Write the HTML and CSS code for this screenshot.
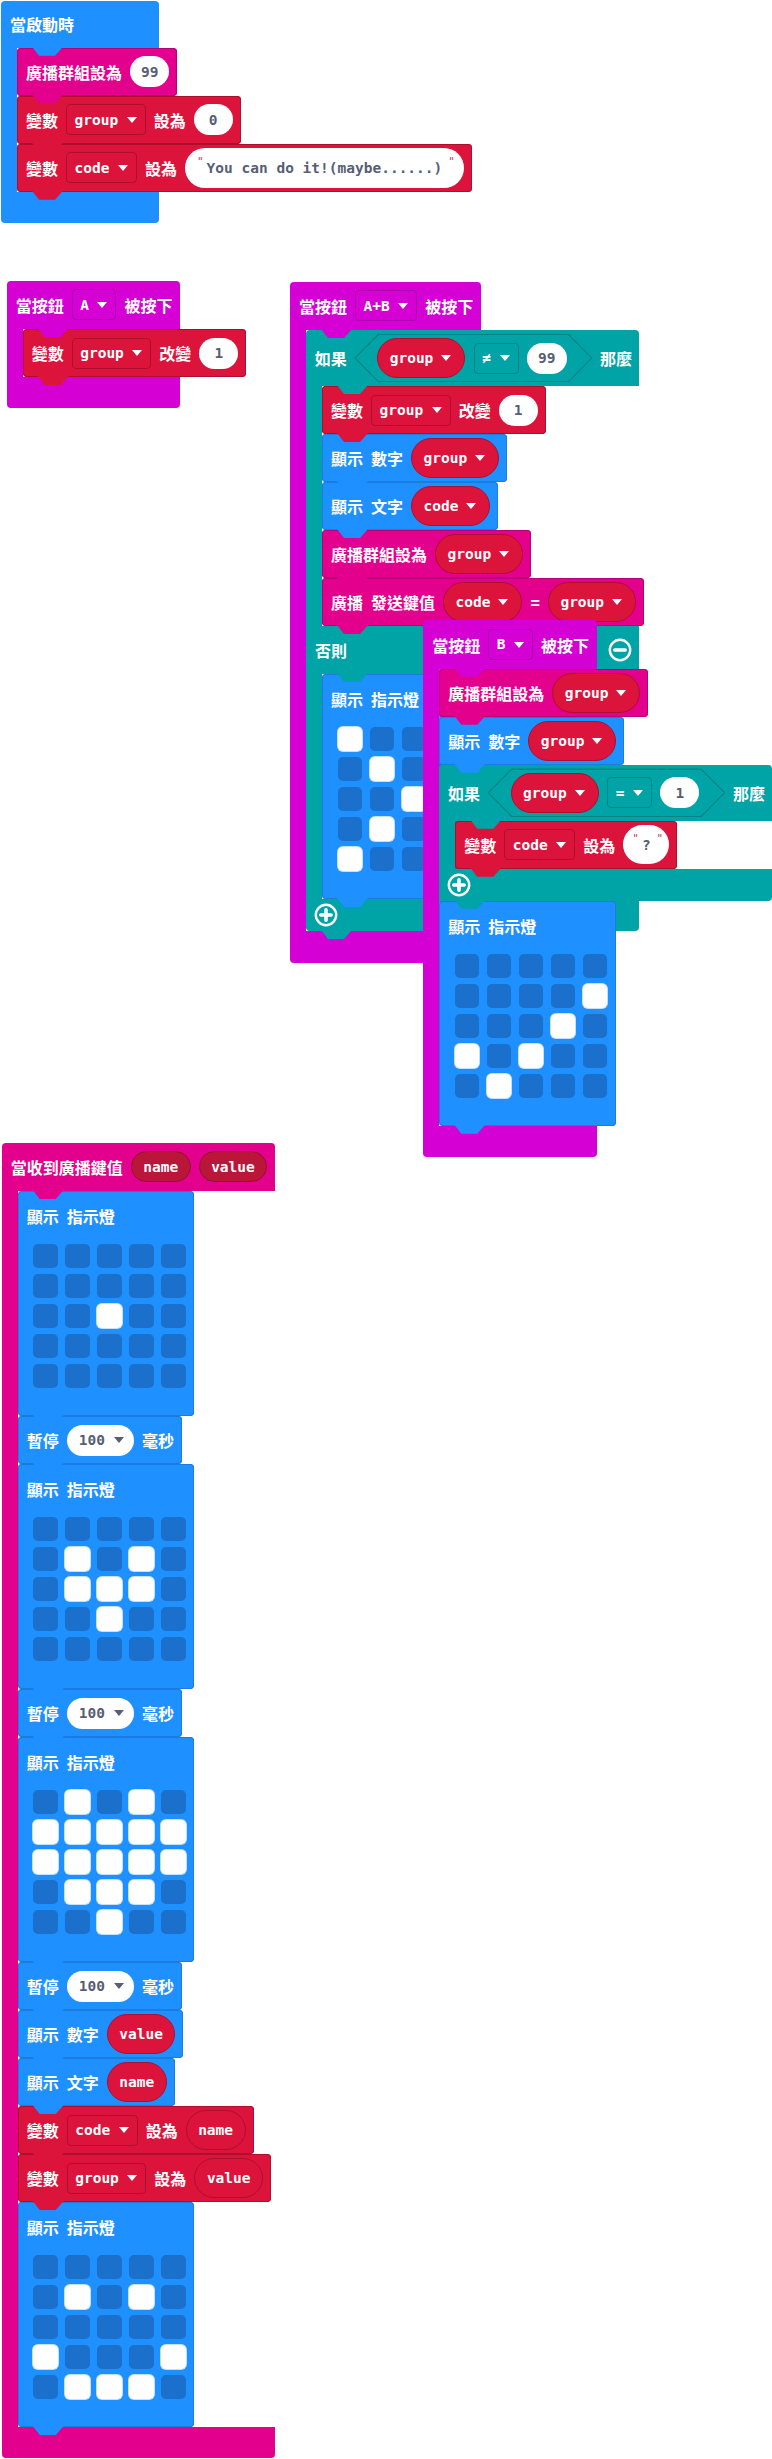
FILE: index.html
```html
<!DOCTYPE html>
<html lang="zh-Hant">
<head>
<meta charset="utf-8">
<title>MakeCode blocks</title>
<link rel="stylesheet" href="styles.css">
</head>
<body>
<div class="ws">

  <!-- on start -->
  <div class="stack s-start">
    <div class="cblk c-blue w-start">
      <div class="head"><span class="lbl">當啟動時</span></div>
      <div class="mid"><div class="spine"></div><div class="kids">
        <div class="blk c-radio"><span class="lbl">廣播群組設為</span><span class="num">99</span></div>
        <div class="blk c-var"><span class="lbl">變數</span><span class="dd">group<i class="arr"></i></span><span class="lbl">設為</span><span class="num">0</span></div>
        <div class="blk c-var"><span class="lbl">變數</span><span class="dd">code<i class="arr"></i></span><span class="lbl">設為</span><span class="str"><i class="q q1">"</i>You can do it!(maybe......)<i class="q q2">"</i></span></div>
      </div></div>
      <div class="foot"></div>
    </div>
  </div>

  <!-- button A -->
  <div class="stack s-a">
    <div class="cblk c-input">
      <div class="head"><span class="lbl">當按鈕</span><span class="dd">A<i class="arr"></i></span><span class="lbl">被按下</span></div>
      <div class="mid"><div class="spine"></div><div class="kids">
        <div class="blk c-var"><span class="lbl">變數</span><span class="dd">group<i class="arr"></i></span><span class="lbl">改變</span><span class="num">1</span></div>
      </div></div>
      <div class="foot"></div>
    </div>
  </div>

  <!-- button A+B -->
  <div class="stack s-ab">
    <div class="cblk c-input tall-foot">
      <div class="head"><span class="lbl">當按鈕</span><span class="dd">A+B<i class="arr"></i></span><span class="lbl">被按下</span></div>
      <div class="mid"><div class="spine"></div><div class="kids">
        <div class="cblk c-logic ifb">
          <div class="head ifh">
            <span class="lbl">如果</span>
            <div class="hex"><span class="rep">group<i class="arr"></i></span><span class="dd">≠<i class="arr"></i></span><span class="num">99</span></div>
            <span class="lbl">那麼</span>
          </div>
          <div class="mid"><div class="spine"></div><div class="kids">
            <div class="blk c-var"><span class="lbl">變數</span><span class="dd">group<i class="arr"></i></span><span class="lbl">改變</span><span class="num">1</span></div>
            <div class="blk c-blue"><span class="lbl">顯示</span><span class="lbl">數字</span><span class="rep">group<i class="arr"></i></span></div>
            <div class="blk c-blue"><span class="lbl">顯示</span><span class="lbl">文字</span><span class="rep">code<i class="arr"></i></span></div>
            <div class="blk c-radio"><span class="lbl">廣播群組設為</span><span class="rep">group<i class="arr"></i></span></div>
            <div class="blk c-radio"><span class="lbl">廣播</span><span class="lbl">發送鍵值</span><span class="rep">code<i class="arr"></i></span><span class="lbl">=</span><span class="rep">group<i class="arr"></i></span></div>
          </div></div>
          <div class="ehead"><span class="lbl">否則</span>
            <svg class="ico" viewBox="0 0 24 24"><circle cx="12" cy="12" r="10.2" fill="none" stroke="#fff" stroke-width="2.4"/><path d="M6.8 12h10.4" stroke="#fff" stroke-width="3.6" stroke-linecap="round"/></svg>
          </div>
          <div class="mid"><div class="spine"></div><div class="kids">
            <div class="blk c-blue leds-blk">
              <div class="ttl"><span class="lbl">顯示</span><span class="lbl">指示燈</span></div>
              <div class="grid">
                <i class="led on"></i><i class="led"></i><i class="led"></i><i class="led"></i><i class="led"></i>
                <i class="led"></i><i class="led on"></i><i class="led"></i><i class="led"></i><i class="led"></i>
                <i class="led"></i><i class="led"></i><i class="led on"></i><i class="led"></i><i class="led"></i>
                <i class="led"></i><i class="led on"></i><i class="led"></i><i class="led"></i><i class="led"></i>
                <i class="led on"></i><i class="led"></i><i class="led"></i><i class="led"></i><i class="led"></i>
              </div>
            </div>
          </div></div>
          <div class="foot ifoot">
            <svg class="ico" viewBox="0 0 24 24"><circle cx="12" cy="12" r="10.2" fill="none" stroke="#fff" stroke-width="2.4"/><path d="M6.8 12h10.4M12 6.8v10.4" stroke="#fff" stroke-width="3.6" stroke-linecap="round"/></svg>
          </div>
        </div>
      </div></div>
      <div class="foot"></div>
    </div>
  </div>

  <!-- button B -->
  <div class="stack s-b">
    <div class="cblk c-input">
      <div class="head"><span class="lbl">當按鈕</span><span class="dd">B<i class="arr"></i></span><span class="lbl">被按下</span></div>
      <div class="mid"><div class="spine"></div><div class="kids">
        <div class="blk c-radio"><span class="lbl">廣播群組設為</span><span class="rep">group<i class="arr"></i></span></div>
        <div class="blk c-blue"><span class="lbl">顯示</span><span class="lbl">數字</span><span class="rep">group<i class="arr"></i></span></div>
        <div class="cblk c-logic ifb">
          <div class="head ifh">
            <span class="lbl">如果</span>
            <div class="hex"><span class="rep">group<i class="arr"></i></span><span class="dd">=<i class="arr"></i></span><span class="num">1</span></div>
            <span class="lbl">那麼</span>
          </div>
          <div class="mid"><div class="spine"></div><div class="kids">
            <div class="blk c-var"><span class="lbl">變數</span><span class="dd">code<i class="arr"></i></span><span class="lbl">設為</span><span class="str short"><i class="q q1">"</i>?<i class="q q2">"</i></span></div>
          </div></div>
          <div class="foot ifoot">
            <svg class="ico" viewBox="0 0 24 24"><circle cx="12" cy="12" r="10.2" fill="none" stroke="#fff" stroke-width="2.4"/><path d="M6.8 12h10.4M12 6.8v10.4" stroke="#fff" stroke-width="3.6" stroke-linecap="round"/></svg>
          </div>
        </div>
        <div class="blk c-blue leds-blk">
          <div class="ttl"><span class="lbl">顯示</span><span class="lbl">指示燈</span></div>
          <div class="grid">
            <i class="led"></i><i class="led"></i><i class="led"></i><i class="led"></i><i class="led"></i>
            <i class="led"></i><i class="led"></i><i class="led"></i><i class="led"></i><i class="led on"></i>
            <i class="led"></i><i class="led"></i><i class="led"></i><i class="led on"></i><i class="led"></i>
            <i class="led on"></i><i class="led"></i><i class="led on"></i><i class="led"></i><i class="led"></i>
            <i class="led"></i><i class="led on"></i><i class="led"></i><i class="led"></i><i class="led"></i>
          </div>
        </div>
      </div></div>
      <div class="foot"></div>
    </div>
  </div>

  <!-- on received -->
  <div class="stack s-recv">
    <div class="cblk c-radio">
      <div class="head"><span class="lbl">當收到廣播鍵值</span><span class="rep prm">name</span><span class="rep prm">value</span></div>
      <div class="mid"><div class="spine"></div><div class="kids">
        <div class="blk c-blue leds-blk">
          <div class="ttl"><span class="lbl">顯示</span><span class="lbl">指示燈</span></div>
          <div class="grid">
            <i class="led"></i><i class="led"></i><i class="led"></i><i class="led"></i><i class="led"></i>
            <i class="led"></i><i class="led"></i><i class="led"></i><i class="led"></i><i class="led"></i>
            <i class="led"></i><i class="led"></i><i class="led on"></i><i class="led"></i><i class="led"></i>
            <i class="led"></i><i class="led"></i><i class="led"></i><i class="led"></i><i class="led"></i>
            <i class="led"></i><i class="led"></i><i class="led"></i><i class="led"></i><i class="led"></i>
          </div>
        </div>
        <div class="blk c-blue"><span class="lbl">暫停</span><span class="num numdd">100<i class="arr"></i></span><span class="lbl">毫秒</span></div>
        <div class="blk c-blue leds-blk">
          <div class="ttl"><span class="lbl">顯示</span><span class="lbl">指示燈</span></div>
          <div class="grid">
            <i class="led"></i><i class="led"></i><i class="led"></i><i class="led"></i><i class="led"></i>
            <i class="led"></i><i class="led on"></i><i class="led"></i><i class="led on"></i><i class="led"></i>
            <i class="led"></i><i class="led on"></i><i class="led on"></i><i class="led on"></i><i class="led"></i>
            <i class="led"></i><i class="led"></i><i class="led on"></i><i class="led"></i><i class="led"></i>
            <i class="led"></i><i class="led"></i><i class="led"></i><i class="led"></i><i class="led"></i>
          </div>
        </div>
        <div class="blk c-blue"><span class="lbl">暫停</span><span class="num numdd">100<i class="arr"></i></span><span class="lbl">毫秒</span></div>
        <div class="blk c-blue leds-blk">
          <div class="ttl"><span class="lbl">顯示</span><span class="lbl">指示燈</span></div>
          <div class="grid">
            <i class="led"></i><i class="led on"></i><i class="led"></i><i class="led on"></i><i class="led"></i>
            <i class="led on"></i><i class="led on"></i><i class="led on"></i><i class="led on"></i><i class="led on"></i>
            <i class="led on"></i><i class="led on"></i><i class="led on"></i><i class="led on"></i><i class="led on"></i>
            <i class="led"></i><i class="led on"></i><i class="led on"></i><i class="led on"></i><i class="led"></i>
            <i class="led"></i><i class="led"></i><i class="led on"></i><i class="led"></i><i class="led"></i>
          </div>
        </div>
        <div class="blk c-blue"><span class="lbl">暫停</span><span class="num numdd">100<i class="arr"></i></span><span class="lbl">毫秒</span></div>
        <div class="blk c-blue"><span class="lbl">顯示</span><span class="lbl">數字</span><span class="rep plain">value</span></div>
        <div class="blk c-blue"><span class="lbl">顯示</span><span class="lbl">文字</span><span class="rep plain">name</span></div>
        <div class="blk c-var"><span class="lbl">變數</span><span class="dd">code<i class="arr"></i></span><span class="lbl">設為</span><span class="rep plain">name</span></div>
        <div class="blk c-var"><span class="lbl">變數</span><span class="dd">group<i class="arr"></i></span><span class="lbl">設為</span><span class="rep plain">value</span></div>
        <div class="blk c-blue leds-blk">
          <div class="ttl"><span class="lbl">顯示</span><span class="lbl">指示燈</span></div>
          <div class="grid">
            <i class="led"></i><i class="led"></i><i class="led"></i><i class="led"></i><i class="led"></i>
            <i class="led"></i><i class="led on"></i><i class="led"></i><i class="led on"></i><i class="led"></i>
            <i class="led"></i><i class="led"></i><i class="led"></i><i class="led"></i><i class="led"></i>
            <i class="led on"></i><i class="led"></i><i class="led"></i><i class="led"></i><i class="led on"></i>
            <i class="led"></i><i class="led on"></i><i class="led on"></i><i class="led on"></i><i class="led"></i>
          </div>
        </div>
      </div></div>
      <div class="foot"></div>
    </div>
  </div>

</div>
</body>
</html>
```
FILE: styles.css
```css
:root {
  --mono: "DejaVu Sans Mono", "Liberation Mono", monospace;
  --cjk: "Noto Sans CJK TC", "Noto Sans", sans-serif;
}

body {
  margin: 0;
  background: #fff;
}

.ws {
  position: relative;
  width: 772px;
  height: 2459px;
  overflow: hidden;
  font-family: var(--cjk);
  font-size: 16px;
  font-weight: 700;
  color: #fff;
}

/* free-canvas placement of the block stacks */
.stack { position: absolute; z-index: 1; }
.s-start { left: 1px; top: 0.5px; }
.s-a { left: 6.7px; top: 280.7px; }
.s-ab { left: 290px; top: 281.7px; }
.s-b { left: 423.3px; top: 620.4px; z-index: 2; }
.s-recv { left: 1.7px; top: 1142.7px; }

/* category colours */
.c-blue  { --c: #1E90FF; --d: #1a7be0; }
.c-input { --c: #D400D4; --d: #ab00ab; }
.c-radio { --c: #E3008C; --d: #b8007a; }
.c-var   { --c: #DC143C; --d: #ad0f2f; }
.c-logic { --c: #00A4A6; --d: #008486; }

/* simple statement block */
.blk {
  position: relative;
  display: flex;
  align-items: center;
  gap: 8px;
  height: 48px;
  padding: 0 8px 0 9px;
  box-sizing: border-box;
  width: max-content;
  flex-shrink: 0;
  background: var(--c);
  border-radius: 4px;
  box-shadow: inset 0 0 0 1px var(--d);
}

/* the connector tab under each statement */
.blk::after,
.cblk > .head::after,
.cblk > .ehead::after,
.cblk > .ifoot::after {
  content: "";
  position: absolute;
  left: 15px;
  bottom: -8px;
  width: 31px;
  height: 9px;
  background: var(--c);
  clip-path: polygon(0 0, 100% 0, 23px 100%, 7px 100%);
  z-index: 3;
}
.cblk > .head::after,
.cblk > .ehead::after { left: 31px; }

/* C-shaped blocks (hats, if/else) */
.cblk {
  display: flex;
  flex-direction: column;
  width: max-content;
  position: relative;
}
.cblk > .head {
  position: relative;
  display: flex;
  align-items: center;
  gap: 8px;
  height: 48.4px;
  padding: 0 8px 0 9px;
  box-sizing: border-box;
  background: var(--c);
  border-radius: 4px 4px 0 0;
}
.w-start > .head { width: 158.3px; height: 47.3px; }
.cblk > .mid { display: flex; width: 16px; }
.mid > .spine { width: 16px; flex-shrink: 0; background: var(--c); }
.mid > .kids {
  display: flex;
  flex-direction: column;
  align-items: flex-start;
  flex-shrink: 0;
}
.cblk > .foot {
  position: relative;
  height: 31px;
  background: var(--c);
  border-radius: 0 0 4px 4px;
}
.tall-foot > .foot { height: 32px; }

/* if / else */
.ifb > .head.ifh {
  height: 56px;
  gap: 7.5px;
  padding: 0 7px 0 8.7px;
  border-radius: 4px 4px 0 0;
}
.cblk > .ehead {
  position: relative;
  display: flex;
  align-items: center;
  justify-content: space-between;
  height: 48px;
  padding: 0 7.5px 0 9px;
  box-sizing: border-box;
  background: var(--c);
}
.ifb > .foot.ifoot {
  display: flex;
  align-items: center;
  height: 32px;
  padding-left: 8px;
  border-radius: 0 0 4px 4px;
}
.ico { display: block; width: 24px; height: 24px; }

/* boolean hexagon */
.hex {
  position: relative;
  display: flex;
  align-items: center;
  gap: 8.5px;
  height: 48.7px;
  padding: 0 26px 0 23px;
  box-sizing: border-box;
  background: var(--d);
  clip-path: polygon(24px 0, calc(100% - 24px) 0, 100% 50%, calc(100% - 24px) 100%, 24px 100%, 0 50%);
}
.hex::before {
  content: "";
  position: absolute;
  inset: 1.2px 1.6px;
  background: var(--c);
  clip-path: polygon(23px 0, calc(100% - 23px) 0, 100% 50%, calc(100% - 23px) 100%, 23px 100%, 0 50%);
}
.hex > * { position: relative; }

/* fields */
.lbl { white-space: nowrap; line-height: 20px; }

.arr {
  display: block;
  width: 0;
  height: 0;
  border-left: 5px solid transparent;
  border-right: 5px solid transparent;
  border-top: 6px solid currentColor;
}

.dd {
  display: flex;
  align-items: center;
  gap: 8.5px;
  height: 31px;
  padding: 0 8px 0 7.5px;
  box-sizing: border-box;
  border: 1px solid var(--d);
  border-radius: 4px;
  font: 700 14.5px/1 var(--mono);
  color: #fff;
}

.num {
  display: flex;
  align-items: center;
  justify-content: center;
  gap: 9px;
  height: 31px;
  min-width: 39px;
  padding: 0 11px;
  box-sizing: border-box;
  border-radius: 16px;
  background: #fff;
  color: #575E75;
  font: 700 14.5px/1 var(--mono);
}
.num.numdd { padding: 0 10px 0 12px; }

.str {
  display: flex;
  align-items: center;
  height: 40.6px;
  padding: 0 9px 0 12px;
  box-sizing: border-box;
  border-radius: 20px;
  background: #fff;
  color: #575E75;
  font: 700 14.5px/1 var(--mono);
  white-space: pre;
}
.str.short { height: 38.7px; padding: 0 6px 0 9px; }
.q {
  font-style: normal;
  font-weight: 400;
  font-size: 11px;
  color: #c8394d;
  align-self: flex-start;
  margin-top: 8px;
}
.q1 { margin-right: 3px; }
.q2 { margin-left: 6px; }

.rep {
  display: flex;
  align-items: center;
  gap: 8px;
  height: 40px;
  padding: 0 13px 0 11.5px;
  box-sizing: border-box;
  border-radius: 20px;
  background: #DC143C;
  border: 1px solid #ad0f2f;
  color: #fff;
  font: 700 14.5px/1 var(--mono);
}
.rep.plain { padding: 0 11.5px; }
.rep.prm {
  height: 31px;
  padding: 0 11.5px;
  background: #B9163A;
  border-color: #98102e;
}

/* LED matrix blocks */
.blk.leds-blk {
  flex-direction: column;
  align-items: flex-start;
  gap: 0;
  height: 225px;
  padding: 15px 8.4px 0 9px;
}
.ttl { display: flex; gap: 8px; height: 20px; }
.grid {
  display: grid;
  grid-template-columns: repeat(5, 24.3px);
  column-gap: 7.7px;
  row-gap: 6px;
  margin: 18.3px 0 0 6.6px;
}
.led {
  display: block;
  height: 24px;
  border-radius: 5px;
  background: #1b70cb;
}
.led.on {
  background: #fff;
  box-shadow: 0 0 0 1px #c4e0ff;
}
```
